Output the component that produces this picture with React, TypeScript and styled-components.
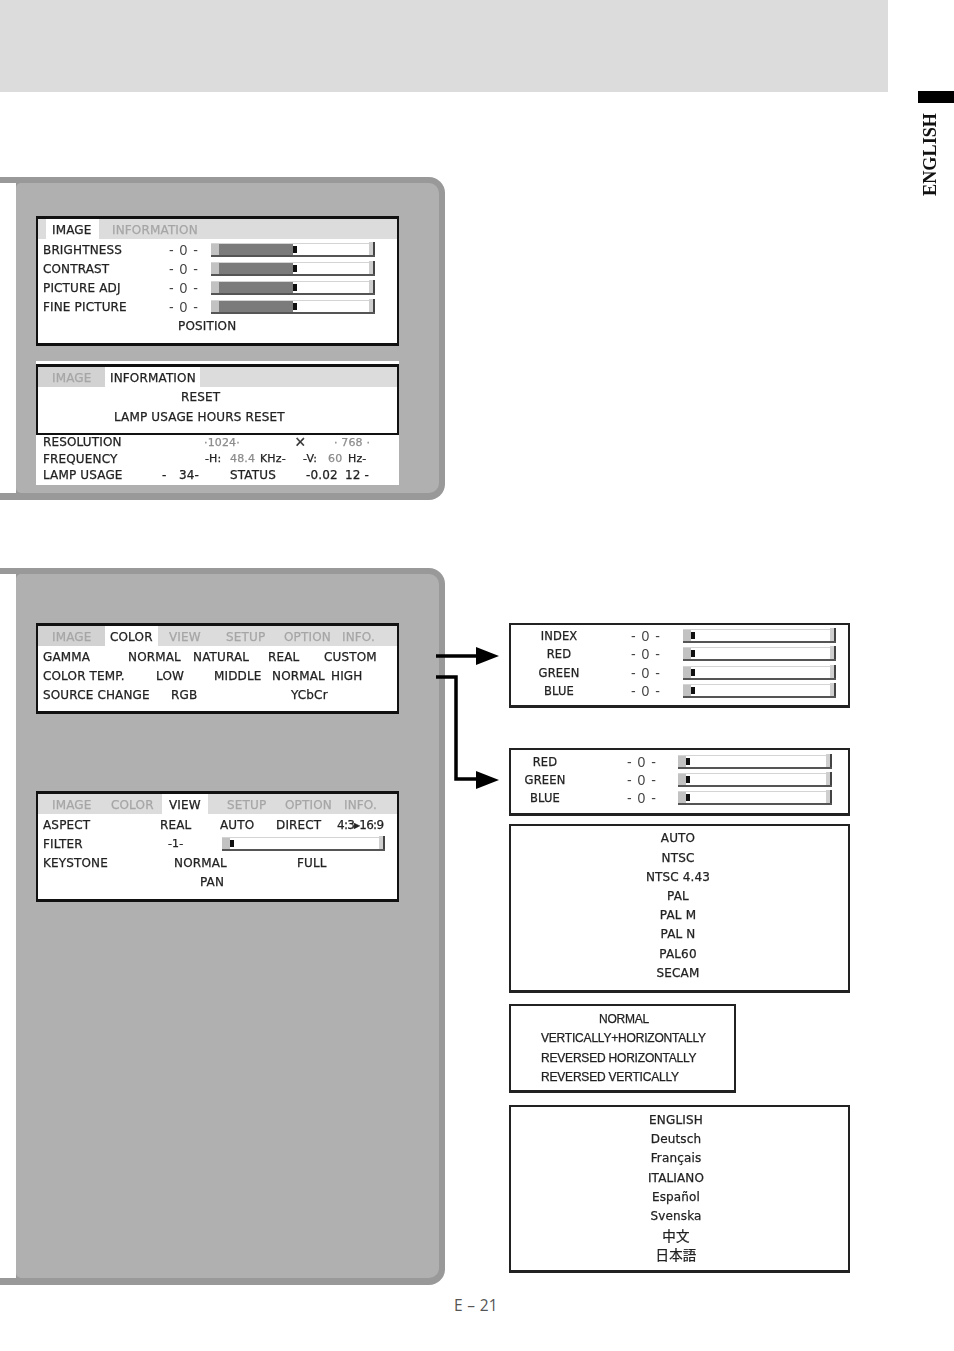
import React from 'react';
import styled, { createGlobalStyle } from 'styled-components';

const Global = createGlobalStyle`
  html, body { margin: 0; padding: 0; background: #fff; }
  * { box-sizing: border-box; }
`;

const Page = styled.div`
  width: 954px;
  height: 1351px;
  overflow: hidden;
  display: flex;
  flex-direction: column;
  font-family: "DejaVu Sans", sans-serif;
  font-size: 12px;
  letter-spacing: 0.15px;
  color: #222;
  -webkit-text-stroke: 0.25px currentColor;
`;
const Header = styled.header`
  display: flex;
  height: 177px;
`;
const Banner = styled.div`
  width: 888px;
  height: 92px;
  background: #dcdcdc;
`;
const Side = styled.div`
  margin-left: 30px;
  padding-top: 91px;
  width: 36px;
`;
const SideTab = styled.div`
  height: 12px;
  background: #000;
`;
const SideLabel = styled.div`
  margin: 10px 0 0 3px;
  writing-mode: vertical-rl;
  transform: rotate(180deg);
  font: bold 18.2px/18px "Liberation Serif", serif;
  letter-spacing: 0;
  -webkit-text-stroke: 0;
  color: #111;
`;
const Panel = styled.section<{ $h: number }>`
  width: 445px;
  height: ${p => p.$h}px;
  flex: none;
  padding: 6px 6px 7px 0;
  display: flex;
  background: #999;
  border-radius: 0 16px 16px 0;
`;
const Notch = styled.div`
  width: 16px;
  flex: none;
  background: #fff;
`;
const PanelBody = styled.div<{ $top: number }>`
  flex: 1;
  padding: ${p => p.$top}px 0 0 20px;
  background: #b0b0b0;
  border-radius: 5px 10px 10px 5px;
`;
const Screen = styled.div<{ $h: number; $mt?: number }>`
  width: 363px;
  height: ${p => p.$h}px;
  margin-top: ${p => p.$mt ?? 0}px;
  background: #fff;
  border: 2px solid #111;
  border-top-width: 3px;
  border-bottom-width: 3px;
  filter: blur(0.35px);
`;
const InfoStack = styled.div`
  width: 363px;
  height: 124px;
  margin-top: 15px;
  padding-top: 3px;
  background: #fff;
  filter: blur(0.35px);
`;
const InfoScreen = styled.div`
  height: 71px;
  border: 2px solid #111;
  border-top-width: 3px;
`;
const TabBar = styled.div`
  display: flex;
  height: 20px;
  background: #dcdcdc;
`;
const Tab = styled.div<{ $w: number; $pl: number; $active?: boolean; $dim?: boolean }>`
  width: ${p => p.$w}px;
  flex: none;
  padding-left: ${p => p.$pl}px;
  line-height: 22px;
  white-space: nowrap;
  color: ${p => (p.$active ? '#222' : '#a6a6a6')};
  background: ${p => (p.$active ? '#fff' : p.$dim ? '#d2d2d2' : 'transparent')};
`;
const RowsBox = styled.div<{ $pt: number; $mt?: number }>`
  padding-top: ${p => p.$pt}px;
  margin-top: ${p => p.$mt ?? 0}px;
`;
const GridRow = styled.div<{ $cols: string; $pad: number; $h: number }>`
  display: grid;
  grid-template-columns: ${p => p.$cols};
  padding-left: ${p => p.$pad}px;
  height: ${p => p.$h}px;
  align-items: center;
  white-space: nowrap;
`;
const Dim = styled.span`
  color: #8c8c8c;
`;
const Small = styled.span`
  font-size: 11px;
`;
const Tight = styled.span`
  letter-spacing: -0.75px;
`;
const Times = styled.span`
  font: 18px/12px "Liberation Sans", sans-serif;
  color: #333;
`;
const Value = styled.span`
  font: 14px/14px "Liberation Sans", sans-serif;
  letter-spacing: 1px;
  color: #444;
  -webkit-text-stroke: 0;
`;
const Centered = styled.div<{ $w: number }>`
  width: ${p => p.$w}px;
  text-align: center;
  font-size: 11.5px;
`;
const Track = styled.div<{ $w: number }>`
  width: ${p => p.$w}px;
  height: 14px;
  display: flex;
  background: #fff;
  border-top: 1px solid #d4d4d4;
  border-bottom: 2px solid #555;
`;
const Cap = styled.div`
  width: 8px;
  background: #c2c2c2;
`;
const Fill = styled.div<{ $w: number }>`
  width: ${p => p.$w}px;
  background: #7b7b7b;
`;
const Thumb = styled.div`
  width: 4px;
  margin: 2px 0;
  background: #111;
`;
const TrackGap = styled.div`
  flex: 1;
`;
const TrackEnd = styled.div`
  width: 6px;
  margin-top: -2px;
  background: #cfcfcf;
  border-right: 2px solid #444;
`;
const Section = styled.div`
  display: flex;
  margin-top: 68px;
`;
const Diagram = styled.svg`
  position: absolute;
  left: 436px;
  top: 640px;
`;
const Column = styled.div`
  margin-left: 64px;
  padding-top: 55px;
  display: flex;
  flex-direction: column;
`;
const Box = styled.div<{ $w?: number; $h: number; $mt?: number; $pt: number }>`
  width: ${p => p.$w ?? 341}px;
  height: ${p => p.$h}px;
  margin-top: ${p => p.$mt ?? 0}px;
  padding-top: ${p => p.$pt}px;
  border: 2px solid #222;
  border-bottom-width: 3px;
  background: #fff;
  filter: blur(0.35px);
`;
const ListLine = styled.div<{ $cx: number; $h: number }>`
  height: ${p => p.$h}px;
  line-height: ${p => p.$h}px;
  width: ${p => p.$cx * 2}px;
  text-align: center;
  white-space: nowrap;
`;
const CjkLine = styled(ListLine)`
  font: 13.5px/18px "Noto Sans CJK JP", sans-serif;
`;
const Condensed = styled.div<{ $left?: number; $cx?: number }>`
  height: 19.4px;
  padding-left: ${p => p.$left ?? 0}px;
  width: ${p => (p.$cx ? p.$cx * 2 + 'px' : 'auto')};
  text-align: ${p => (p.$cx ? 'center' : 'left')};
  font: 12px/19.4px "Liberation Sans", sans-serif;
  letter-spacing: -0.2px;
  white-space: nowrap;
`;
const Footer = styled.footer`
  width: 952px;
  margin-top: 10px;
  text-align: center;
  font: 15.5px/20px "Open Sans", sans-serif;
  letter-spacing: 0.3px;
  -webkit-text-stroke: 0;
  color: #555;
`;

const Row = ({ base, at, h = 19, children }: { base: number; at: number[]; h?: number; children: React.ReactNode }) => {
  const cols = at.map((x, i) => (i < at.length - 1 ? `${at[i + 1] - x}px` : '1fr')).join(' ');
  return <GridRow $cols={cols} $pad={at[0] - base} $h={h}>{children}</GridRow>;
};

const Slider = ({ w, fill = 0 }: { w: number; fill?: number }) => (
  <Track $w={w}>
    <Cap />
    <Fill $w={fill} />
    <Thumb />
    <TrackGap />
    <TrackEnd />
  </Track>
);

const Zero = () => <Value>- 0 -</Value>;

const TabsColor = ({ active }: { active: 'COLOR' | 'VIEW' }) =>
  active === 'COLOR' ? (
    <TabBar>
      <Tab $w={67} $pl={14} $dim>IMAGE</Tab>
      <Tab $w={53} $pl={5} $active>COLOR</Tab>
      <Tab $w={68} $pl={11}>VIEW</Tab>
      <Tab $w={58} $pl={0}>SETUP</Tab>
      <Tab $w={58} $pl={0}>OPTION</Tab>
      <Tab $w={50} $pl={0}>INFO.</Tab>
    </TabBar>
  ) : (
    <TabBar>
      <Tab $w={73} $pl={14}>IMAGE</Tab>
      <Tab $w={51} $pl={0}>COLOR</Tab>
      <Tab $w={46} $pl={7} $active>VIEW</Tab>
      <Tab $w={77} $pl={19}>SETUP</Tab>
      <Tab $w={59} $pl={0}>OPTION</Tab>
      <Tab $w={50} $pl={0}>INFO.</Tab>
    </TabBar>
  );

const BIG = [43, 169, 211];

export default function App() {
  return (
    <Page>
      <Global />
      <Header>
        <Banner />
        <Side>
          <SideTab />
          <SideLabel>ENGLISH</SideLabel>
        </Side>
      </Header>

      <Panel $h={323}>
        <Notch />
        <PanelBody $top={33}>
          <Screen $h={130}>
            <TabBar>
              <Tab $w={8} $pl={0} />
              <Tab $w={53} $pl={6} $active>IMAGE</Tab>
              <Tab $w={200} $pl={13}>INFORMATION</Tab>
            </TabBar>
            <RowsBox $pt={1}>
              {['BRIGHTNESS', 'CONTRAST', 'PICTURE ADJ', 'FINE PICTURE'].map(l => (
                <Row key={l} base={38} at={BIG}>
                  <span>{l}</span>
                  <Zero />
                  <Slider w={164} fill={74} />
                </Row>
              ))}
              <Row base={38} at={[178]}><span>POSITION</span></Row>
            </RowsBox>
          </Screen>
          <InfoStack>
            <InfoScreen>
              <TabBar>
                <Tab $w={67} $pl={14} $dim>IMAGE</Tab>
                <Tab $w={95} $pl={5} $active>INFORMATION</Tab>
              </TabBar>
              <Row base={38} at={[181]} h={20}><span>RESET</span></Row>
              <Row base={38} at={[114]} h={20}><span>LAMP USAGE HOURS RESET</span></Row>
            </InfoScreen>
            <RowsBox $pt={0} $mt={-1}>
              <Row base={36} at={[43, 204, 295, 334]} h={16.5}>
                <span>RESOLUTION</span>
                <Small><Dim>·1024·</Dim></Small>
                <Times>×</Times>
                <Small><Dim>· 768 ·</Dim></Small>
              </Row>
              <Row base={36} at={[43, 205, 230, 260, 303, 328, 348]} h={16.5}>
                <span>FREQUENCY</span>
                <Small>-H:</Small>
                <Small><Dim>48.4</Dim></Small>
                <Small>KHz-</Small>
                <Small>-V:</Small>
                <Small><Dim>60</Dim></Small>
                <Small>Hz-</Small>
              </Row>
              <Row base={36} at={[43, 162, 179, 230, 306, 345]} h={16.5}>
                <span>LAMP USAGE</span>
                <span>-</span>
                <span>34-</span>
                <span>STATUS</span>
                <span>-0.02</span>
                <span>12 -</span>
              </Row>
            </RowsBox>
          </InfoStack>
        </PanelBody>
      </Panel>

      <Section>
        <Panel $h={717}>
          <Notch />
          <PanelBody $top={49}>
            <Screen $h={91}>
              <TabsColor active="COLOR" />
              <RowsBox $pt={1.5}>
                <Row base={38} at={[43, 128, 193, 268, 324]}>
                  <span>GAMMA</span><span>NORMAL</span><span>NATURAL</span><span>REAL</span><span>CUSTOM</span>
                </Row>
                <Row base={38} at={[43, 156, 214, 272, 331]}>
                  <span>COLOR TEMP.</span><span>LOW</span><span>MIDDLE</span><span>NORMAL</span><span>HIGH</span>
                </Row>
                <Row base={38} at={[43, 171, 291]}>
                  <span>SOURCE CHANGE</span><span>RGB</span><span>YCbCr</span>
                </Row>
              </RowsBox>
            </Screen>
            <Screen $h={111} $mt={77}>
              <TabsColor active="VIEW" />
              <RowsBox $pt={1}>
                <Row base={38} at={[43, 160, 220, 276, 337]}>
                  <span>ASPECT</span><span>REAL</span><span>AUTO</span><span>DIRECT</span><Tight>4:3▸16:9</Tight>
                </Row>
                <Row base={38} at={[43, 168, 222]}>
                  <span>FILTER</span><Small>-1-</Small><Slider w={163} />
                </Row>
                <Row base={38} at={[43, 174, 297]}>
                  <span>KEYSTONE</span><span>NORMAL</span><span>FULL</span>
                </Row>
                <Row base={38} at={[200]}><span>PAN</span></Row>
              </RowsBox>
            </Screen>
          </PanelBody>
        </Panel>

        <Diagram width={64} height={150} viewBox="0 0 64 150">
          <path d="M0 16H42" stroke="#000" strokeWidth="3.5" fill="none" />
          <path d="M40 7L63 16L40 25Z" fill="#000" />
          <path d="M0 37H20V139H42" stroke="#000" strokeWidth="3.5" fill="none" />
          <path d="M40 131L63 140L40 149Z" fill="#000" />
        </Diagram>

        <Column>
          <Box $h={85} $pt={2}>
            {['INDEX', 'RED', 'GREEN', 'BLUE'].map(l => (
              <Row key={l} base={511} at={[511, 631, 683]} h={18.3}>
                <Centered $w={96}>{l}</Centered>
                <Zero />
                <Slider w={153} />
              </Row>
            ))}
          </Box>
          <Box $h={68} $mt={40} $pt={3}>
            {['RED', 'GREEN', 'BLUE'].map(l => (
              <Row key={l} base={511} at={[511, 627, 678]} h={18}>
                <Centered $w={68}>{l}</Centered>
                <Zero />
                <Slider w={154} />
              </Row>
            ))}
          </Box>
          <Box $h={169} $mt={8} $pt={3.4}>
            {['AUTO', 'NTSC', 'NTSC 4.43', 'PAL', 'PAL M', 'PAL N', 'PAL60', 'SECAM'].map(l => (
              <ListLine key={l} $cx={167} $h={19.2}>{l}</ListLine>
            ))}
          </Box>
          <Box $w={227} $h={89} $mt={11} $pt={4}>
            <Condensed $cx={113}>NORMAL</Condensed>
            <Condensed $left={30}>VERTICALLY+HORIZONTALLY</Condensed>
            <Condensed $left={30}>REVERSED HORIZONTALLY</Condensed>
            <Condensed $left={30}>REVERSED VERTICALLY</Condensed>
          </Box>
          <Box $h={168} $mt={12} $pt={4}>
            {['ENGLISH', 'Deutsch', 'Français', 'ITALIANO', 'Español', 'Svenska'].map(l => (
              <ListLine key={l} $cx={165} $h={19.2}>{l}</ListLine>
            ))}
            <CjkLine $cx={165} $h={19.2}>中文</CjkLine>
            <CjkLine $cx={165} $h={19.2}>日本語</CjkLine>
          </Box>
        </Column>
      </Section>

      <Footer>E – 21</Footer>
    </Page>
  );
}
